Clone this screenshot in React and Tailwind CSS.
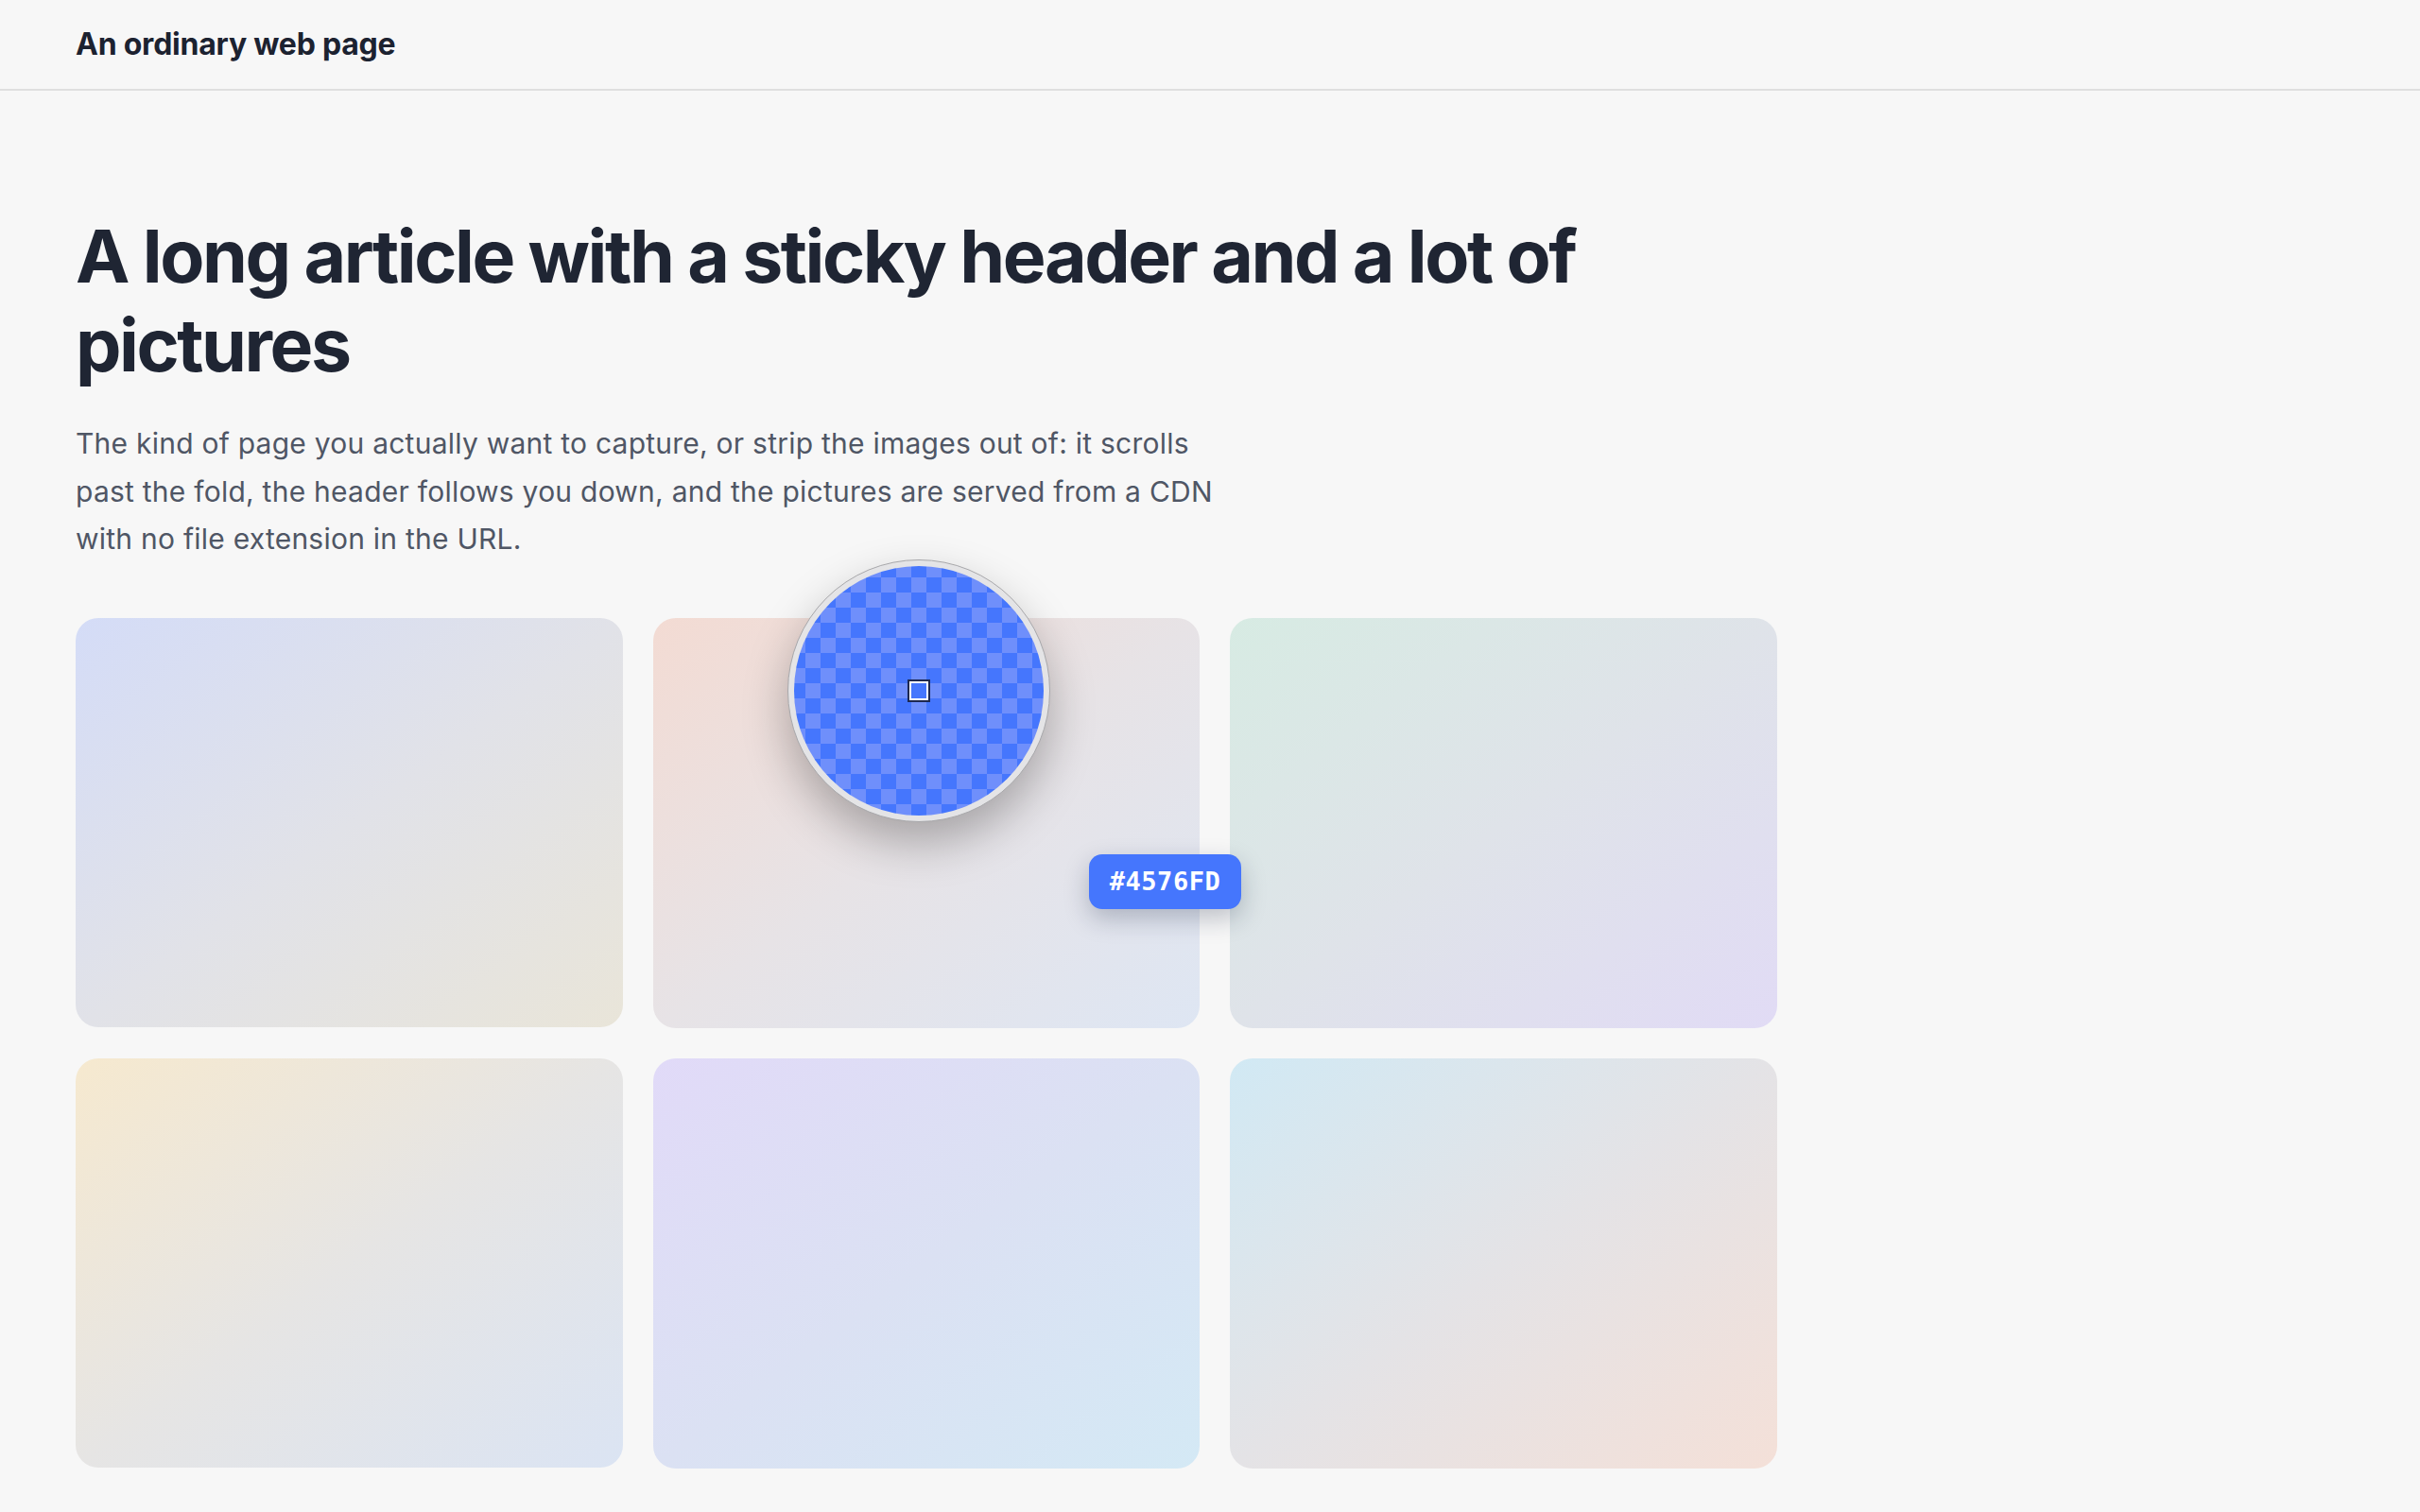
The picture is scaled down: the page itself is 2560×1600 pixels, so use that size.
import React from 'react';

const cards = [
  'from-[#d4dcf7] via-[#e1e2e8] to-[#e9e5d9]',
  'from-[#f3dbd3] via-[#e7e3e6] to-[#dee6f3]',
  'from-[#d7ebe3] via-[#dfe3e9] to-[#e1dbf5]',
  'from-[#f6e9cf] via-[#e6e5e4] to-[#dbe4f3]',
  'from-[#e1daf8] via-[#dbe1f3] to-[#d4e9f5]',
  'from-[#d1e9f4] via-[#e4e3e6] to-[#f4e0d8]',
];

function Magnifier() {
  return (
    <div className="absolute left-[833px] top-[592px] w-[278px] h-[278px] rounded-full bg-[#e4e4e6] border border-[#a8a8ab] p-[6px] shadow-[0_22px_48px_rgba(0,0,0,0.28)]">
      <div className="relative w-full h-full rounded-full overflow-hidden">
        <svg width="264" height="264" viewBox="0 0 264 264" className="block">
          <defs>
            <pattern id="chk" x="124" y="124" width="32" height="32" patternUnits="userSpaceOnUse">
              <rect x="0" y="0" width="32" height="32" fill="#6f8ffb" />
              <rect x="0" y="0" width="16" height="16" fill="#4576fd" />
              <rect x="16" y="16" width="16" height="16" fill="#4576fd" />
            </pattern>
          </defs>
          <rect width="264" height="264" fill="url(#chk)" />
          <rect x="121" y="121" width="22" height="22" fill="none" stroke="#1d2850" strokeWidth="2" />
          <rect x="123" y="123" width="18" height="18" fill="none" stroke="#ffffff" strokeWidth="2" />
        </svg>
      </div>
    </div>
  );
}

export default function App() {
  return (
    <div className="relative min-h-[1600px] bg-[#f7f7f7] font-['Inter',_'Liberation_Sans',_sans-serif]">
      <header className="h-[96px] flex items-center px-[80px] border-b-2 border-[#dfdfdf] bg-[#f7f7f7]">
        <span className="text-[32px] font-bold tracking-[-0.007em] text-[#1c2230]">An ordinary web page</span>
      </header>

      <main className="px-[80px] pt-[128px]">
        <h1 className="text-[77px] leading-[94px] font-bold tracking-[-0.032em] text-[#1f2533] max-w-[1700px]">
          A long article with a sticky header and a lot of pictures
        </h1>
        <p className="mt-[32px] max-w-[1225px] text-[30px] leading-[50.5px] tracking-[0.008em] text-[#4f5665]">
          The kind of page you actually want to capture, or strip the images out of: it scrolls past the fold, the header follows you down, and the pictures are served from a CDN with no file extension in the URL.
        </p>

        <div className="mt-[58px] w-[1800px] grid grid-cols-3 gap-[32px]">
          {cards.map((c, i) => (
            <div key={i} className={`aspect-[4/3] rounded-[24px] bg-linear-to-br ${c}`} />
          ))}
        </div>
      </main>

      <Magnifier />

      <div className="absolute left-[1152px] top-[904px] w-[161px] h-[58px] rounded-[14px] bg-[#4576fd] flex items-center justify-center shadow-[0_10px_26px_rgba(20,30,60,0.25)]">
        <span className="text-white font-bold text-[27px] tracking-[0.02em] font-['DejaVu_Sans_Mono',_monospace]">#4576FD</span>
      </div>
    </div>
  );
}
